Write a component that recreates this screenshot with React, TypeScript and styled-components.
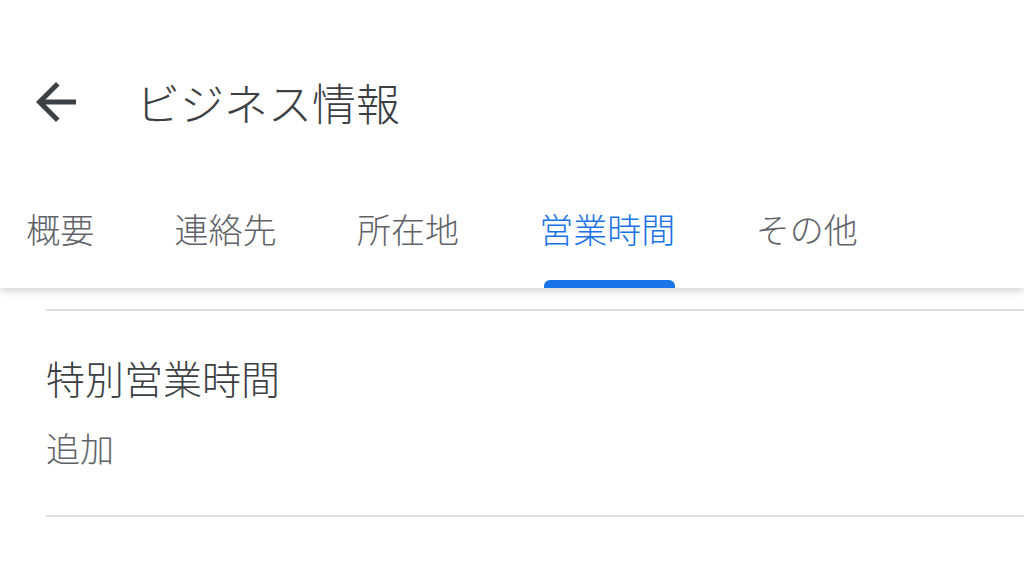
import styled, { createGlobalStyle } from "styled-components";

const GlobalStyle = createGlobalStyle`
    html, body {
        margin: 0;
        padding: 0;
        background: #fff;
        font-family: "Noto Sans CJK JP", "Noto Sans", sans-serif;
    }
`;

const Page = styled.div`
    width: 1024px;
    height: 576px;
    overflow: hidden;
    background: #fff;
`;

const Header = styled.header`
    position: relative;
    z-index: 1;
    background: #fff;
    box-shadow: 0 3px 8px rgba(0, 0, 0, 0.18);
`;

const TopBar = styled.div`
    height: 204px;
    display: flex;
    align-items: center;
    padding-left: 26px;
`;

const BackButton = styled.button`
    width: 60px;
    height: 60px;
    padding: 0;
    border: none;
    background: none;
    display: flex;
    color: #3c4043;
`;

const Title = styled.h1`
    margin: 0 0 0 50px;
    font-size: 44px;
    font-weight: 300;
    line-height: 1;
    color: #3c4043;
`;

const TabStrip = styled.nav`
    height: 84px;
    display: flex;
    margin-left: -14px;
`;

const Tab = styled.div<{ $active?: boolean }>`
    display: flex;
    flex-direction: column;
    justify-content: space-between;
    padding: 8px 40.2px 0;
    font-size: 34px;
    font-weight: 300;
    line-height: 1;
    color: ${(p) => (p.$active ? "#1a73e8" : "#5f6368")};
`;

const Indicator = styled.div`
    height: 8px;
    margin: 0 0 0 5px;
    background: #1a73e8;
    border-radius: 6px 6px 0 0;
`;

const Content = styled.main`
    margin-left: 46px;
    padding-top: 21px;
`;

const Divider = styled.hr`
    margin: 0;
    border: none;
    height: 2px;
    background: #dfe0e2;
`;

const Section = styled.section`
    padding: 47px 0 50px;
    display: flex;
    flex-direction: column;
    gap: 34px;
`;

const SectionTitle = styled.div`
    font-size: 39px;
    font-weight: 300;
    line-height: 1;
    color: #3c4043;
`;

const SectionAction = styled.div`
    font-size: 34px;
    font-weight: 300;
    line-height: 1;
    color: #5f6368;
`;

const tabs = ["概要", "連絡先", "所在地", "営業時間", "その他"];

export default function App() {
    const active = "営業時間";
    return (
        <Page>
            <GlobalStyle />
            <Header>
                <TopBar>
                    <BackButton aria-label="戻る">
                        <svg width="60" height="60" viewBox="0 0 24 24">
                            <path
                                fill="currentColor"
                                d="M20 11H7.83l5.59-5.59L12 4l-8 8 8 8 1.41-1.41L7.83 13H20v-2z"
                            />
                        </svg>
                    </BackButton>
                    <Title>ビジネス情報</Title>
                </TopBar>
                <TabStrip>
                    {tabs.map((t) => (
                        <Tab key={t} $active={t === active}>
                            <span>{t}</span>
                            {t === active && <Indicator />}
                        </Tab>
                    ))}
                </TabStrip>
            </Header>
            <Content>
                <Divider />
                <Section>
                    <SectionTitle>特別営業時間</SectionTitle>
                    <SectionAction>追加</SectionAction>
                </Section>
                <Divider />
            </Content>
        </Page>
    );
}
